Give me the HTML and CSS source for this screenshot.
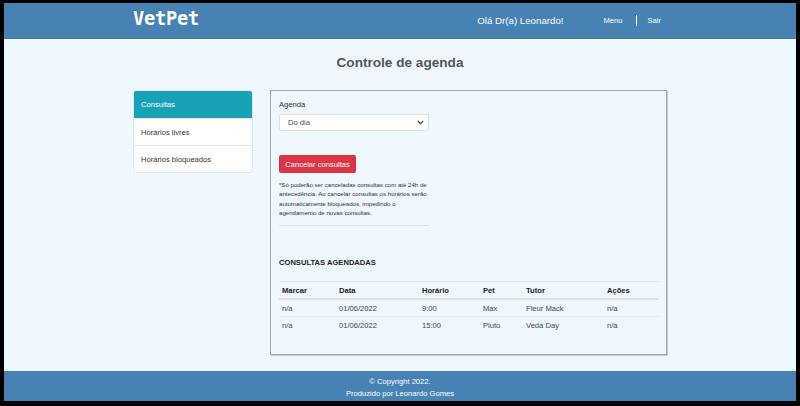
FILE: index.html
```html
<!DOCTYPE html>
<html lang="pt-BR">
<head>
<meta charset="utf-8">
<title>VetPet - Controle de agenda</title>
<link rel="stylesheet" href="styles.css">
</head>
<body>
<div class="frame">
  <header class="topbar">
    <div class="container topbar-inner">
      <div class="brand">VetPet</div>
      <div class="greeting">Olá Dr(a) Leonardo!</div>
      <nav class="nav">
        <a class="nav-link">Menu</a>
        <span class="nav-sep"></span>
        <a class="nav-link">Sair</a>
      </nav>
    </div>
  </header>

  <main class="main">
    <h1 class="title">Controle de agenda</h1>
    <div class="container content">
      <ul class="side-list">
        <li class="side-item active">Consultas</li>
        <li class="side-item">Horários livres</li>
        <li class="side-item">Horários bloqueados</li>
      </ul>

      <section class="panel">
        <label class="label">Agenda</label>
        <div class="select">
          <span>Do dia</span>
          <svg class="chev" width="7" height="5" viewBox="0 0 7 5"><path d="M0.8 1 L3.5 3.7 L6.2 1" fill="none" stroke="#343a40" stroke-width="1.1"/></svg>
        </div>
        <button class="btn-danger">Cancelar consultas</button>
        <p class="note">*Só poderão ser canceladas consultas com até 24h de antecedência. Ao cancelar consultas os horários serão automaticamente bloqueados, impedindo o agendamento de novas consultas.</p>
        <div class="rule"></div>
        <h2 class="section-title">CONSULTAS AGENDADAS</h2>
        <table class="table">
          <colgroup>
            <col class="c1"><col class="c2"><col class="c3"><col class="c4"><col class="c5"><col class="c6">
          </colgroup>
          <thead>
            <tr><th>Marcar</th><th>Data</th><th>Horário</th><th>Pet</th><th>Tutor</th><th>Ações</th></tr>
          </thead>
          <tbody>
            <tr><td>n/a</td><td>01/06/2022</td><td>9:00</td><td>Max</td><td>Fleur Mack</td><td>n/a</td></tr>
            <tr class="last"><td>n/a</td><td>01/06/2022</td><td>15:00</td><td>Pluto</td><td>Veda Day</td><td>n/a</td></tr>
          </tbody>
        </table>
      </section>
    </div>
  </main>

  <footer class="footer">
    <div>© Copyright 2022.</div>
    <div>Produzido por Leonardo Gomes</div>
  </footer>
</div>
</body>
</html>
```

FILE: styles.css
```css
html, body {
  margin: 0;
  padding: 0;
  background: #000;
}

body {
  font-family: "Liberation Sans", Arial, sans-serif;
  color: #212529;
}

.frame {
  margin: 3px 4px 5px 4px;
  height: 398px;
  background: #f0f8ff;
  display: flex;
  flex-direction: column;
  overflow: hidden;
}

.container {
  width: 534px;
  margin: 0 auto;
}

/* header */
.topbar {
  height: 36px;
  flex: none;
  background: #4682b4;
  border-bottom: 1px solid #3f76a3;
  box-sizing: border-box;
}

.topbar-inner {
  height: 100%;
  display: flex;
  align-items: center;
}

.brand {
  font-family: "DejaVu Sans Mono", "Liberation Mono", monospace;
  font-weight: bold;
  font-size: 18.6px;
  color: #fff;
  letter-spacing: -0.2px;
  margin-top: -4px;
}

.greeting {
  margin-left: auto;
  color: #fff;
  font-size: 9.7px;
}

.nav {
  display: flex;
  align-items: center;
  margin-left: 40px;
  margin-right: 6px;
}

.nav-link {
  color: #fff;
  font-size: 7.6px;
}

.nav-sep {
  width: 1px;
  height: 11px;
  background: #fff;
  margin: 0 10px 0 14px;
}

/* main */
.main {
  flex: 1;
}

.title {
  margin: 15px 0 0;
  height: 36px;
  text-align: center;
  font-size: 13.6px;
  line-height: 17px;
  font-weight: bold;
  color: #555;
}

.content {
  display: flex;
  align-items: flex-start;
}

.side-list {
  list-style: none;
  margin: 0;
  padding: 0;
  width: 120px;
  box-sizing: border-box;
  flex: none;
  background: #fff;
  border: 1px solid #e2e6ea;
  border-radius: 3px;
  overflow: hidden;
}

.side-item {
  height: 27px;
  display: flex;
  align-items: center;
  padding-left: 7px;
  font-size: 7.6px;
  color: #333;
  border-top: 1px solid #e2e6ea;
  box-sizing: border-box;
}

.side-item:first-child {
  border-top: 0;
  height: 27px;
}

.side-item.active {
  background: #17a2b8;
  color: #fff;
}

.panel {
  margin-left: 17px;
  width: 397px;
  height: 265px;
  box-sizing: border-box;
  border: 1px solid #a4a8ac;
  box-shadow: 1px 1px 0 #c4cad0;
  padding: 8px 8px 0 8px;
}

.label {
  display: block;
  font-size: 7.6px;
  line-height: 11px;
  color: #333;
}

.select {
  margin-top: 4px;
  width: 150px;
  height: 17px;
  box-sizing: border-box;
  background: #fff;
  border: 1px solid #dde2e6;
  border-radius: 2px;
  display: flex;
  align-items: center;
  padding: 0 4px 0 8px;
  font-size: 7.6px;
  color: #495057;
}

.chev {
  margin-left: auto;
}

.btn-danger {
  display: block;
  margin-top: 24px;
  width: 77px;
  height: 18px;
  padding: 0;
  border: 0;
  border-radius: 2px;
  background: #dc3545;
  color: #fff;
  font-family: "Liberation Sans", Arial, sans-serif;
  font-size: 7.6px;
}

.note {
  margin: 7px 0 0;
  width: 152px;
  font-size: 6.1px;
  line-height: 9.3px;
  color: #333;
}

.rule {
  margin-top: 8px;
  width: 150px;
  height: 1px;
  background: #dfe4e8;
}

.section-title {
  margin: 31px 0 0;
  font-size: 7.6px;
  line-height: 11px;
  font-weight: bold;
  color: #222;
}

.table {
  margin-top: 13px;
  width: 380px;
  border-collapse: collapse;
  table-layout: fixed;
  font-size: 7.6px;
}

.c1 { width: 57px; }
.c2 { width: 83px; }
.c3 { width: 61px; }
.c4 { width: 43px; }
.c5 { width: 81px; }
.c6 { width: 55px; }

.table th,
.table td {
  text-align: left;
  padding: 0 3px;
  height: 16px;
}

.table th {
  font-weight: bold;
  color: #222;
  border-top: 1px solid #e3e8ec;
  border-bottom: 2px solid #dde2e6;
}

.table td {
  color: #444;
  border-bottom: 1px solid #e3e8ec;
}

.table tr.last td {
  border-bottom: 0;
}

/* footer */
.footer {
  height: 30px;
  flex: none;
  background: #4682b4;
  color: #fff;
  text-align: center;
  font-size: 7.6px;
  line-height: 12px;
  padding-top: 5px;
  box-sizing: border-box;
}
```
